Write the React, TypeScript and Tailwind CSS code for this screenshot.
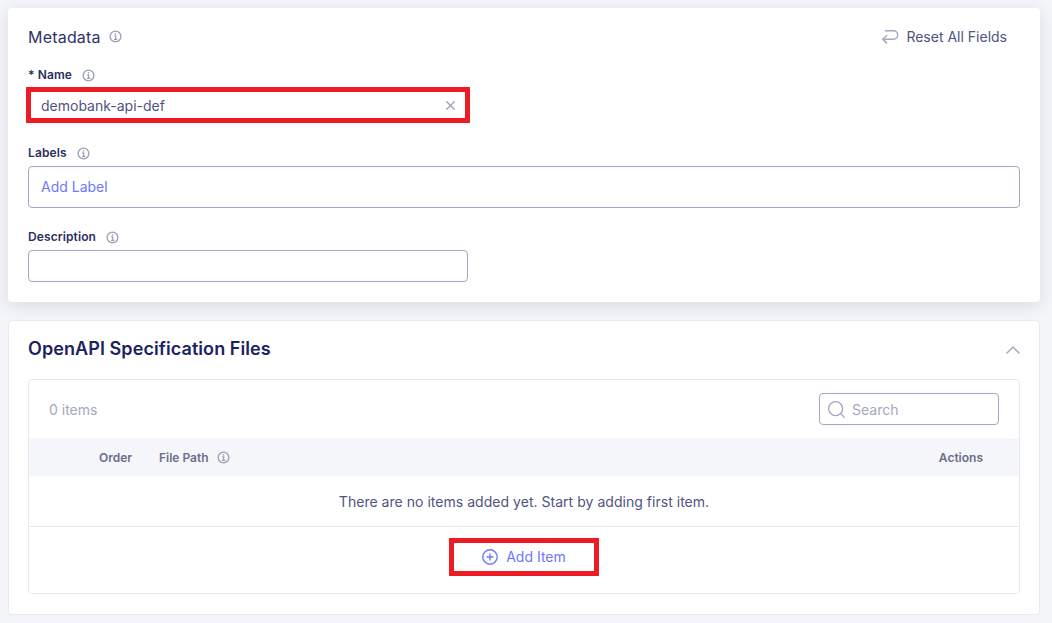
import React from "react";
import { ChevronUp, Search, X } from "lucide-react";

function InfoIcon({ className = "" }: { className?: string }) {
  return (
    <svg viewBox="0 0 14 14" className={`w-[13px] h-[13px] text-[#9a9fb5] ${className}`} fill="none" stroke="currentColor">
      <circle cx="7" cy="7" r="5.8" strokeWidth="1.4" />
      <path d="M5.6 6.3H7.2V10M5.4 10H9" strokeWidth="1.3" />
      <path d="M7 3.4V4.9" strokeWidth="1.5" />
    </svg>
  );
}

function FieldLabel({ children }: { children: React.ReactNode }) {
  return (
    <div className="flex items-center gap-[10px] h-4 text-[12px] font-semibold tracking-[0.1px] text-[#2a2f5e]">
      <span>{children}</span>
      <InfoIcon />
    </div>
  );
}

export default function App() {
  return (
    <div className="h-[623px] overflow-hidden bg-[#f4f5f9] pt-2 pl-2 pr-3 font-['Inter',sans-serif]">
      {/* Metadata card */}
      <section className="h-[294px] rounded-[4px] bg-white px-5 shadow-[0_4px_16px_rgba(40,44,80,0.12)]">
        <div className="flex h-[59px] items-center justify-between pb-[2px]">
          <div className="flex items-center gap-2 text-[16px] tracking-[0.2px] text-[#2f3468]">
            <span>Metadata</span>
            <InfoIcon />
          </div>
          <div className="flex items-center gap-[7px] pr-[13px] text-[14px] text-[#4f5482]">
            <svg viewBox="0 0 18 16" className="w-[18px] h-4 text-[#a4a8bf]" fill="none" stroke="currentColor" strokeWidth="1.5">
              <path d="M4 1.8H12.5a4.2 4.2 0 0 1 0 8.4H2" />
              <path d="M6 6.2L1.8 10.2L6 14.4" />
            </svg>
            <span>Reset All Fields</span>
          </div>
        </div>

        <FieldLabel>* Name</FieldLabel>
        <div className="mt-[4px] -ml-[2px] flex h-9 w-[444px] items-center justify-between border-[5px] border-[#ed1c24] pl-[10px] pr-[7px] text-[14px] text-[#4f5482]">
          <span>demobank-api-def</span>
          <X className="w-[15px] h-[15px] text-[#9a9fb5]" strokeWidth={2} />
        </div>

        <div className="mt-[22px]">
          <FieldLabel>Labels</FieldLabel>
        </div>
        <div className="mt-[5px] flex h-[42px] items-center rounded-[4px] border border-[#a3a7c0] pb-[1px] pl-3 text-[14px] text-[#6d78fb]">
          Add Label
        </div>

        <div className="mt-[21px]">
          <FieldLabel>Description</FieldLabel>
        </div>
        <div className="mt-[5px] h-8 w-[440px] rounded-[4px] border border-[#a3a7c0]" />
      </section>

      {/* OpenAPI files card */}
      <section className="mt-[18px] h-[295px] rounded-[4px] border border-[#e8e9f2] bg-white px-[19px]">
        <div className="flex h-[58px] items-center justify-between pb-[3px]">
          <h2 className="text-[18px] font-semibold tracking-[0.08px] text-[#1c2260]">OpenAPI Specification Files</h2>
          <ChevronUp className="-mr-[5px] mt-[3px] w-6 h-6 text-[#a4a8bf]" strokeWidth={1.5} />
        </div>

        <div className="h-[215px] rounded-[4px] border border-[#e8e9f2]">
          <div className="flex h-[58px] items-center justify-between px-5">
            <span className="text-[14px] text-[#a4a8bf]">0 items</span>
            <div className="flex h-8 w-[180px] items-center gap-[5px] rounded-[4px] border border-[#a3a7c0] pl-[6px] text-[14px] text-[#a4a8bf]">
              <Search className="w-[21px] h-[21px]" strokeWidth={1.5} />
              <span>Search</span>
            </div>
          </div>

          <div className="flex h-[38px] items-center bg-[#f5f6f9] pt-[1px] text-[12px] font-semibold text-[#6a6f88]">
            <span className="ml-[70px] w-[60px]">Order</span>
            <span>File Path</span>
            <InfoIcon className="ml-2" />
            <span className="ml-auto mr-9">Actions</span>
          </div>

          <div className="flex h-[51px] items-center justify-center border-b border-[#e8e9f2] text-[14px] tracking-[0.03px] text-[#4f5482]">
            There are no items added yet. Start by adding first item.
          </div>

          <div className="flex h-[66px] justify-center pt-[11px]">
            <div className="flex h-[38px] w-[150px] items-center justify-center gap-2 border-[5px] border-[#ed1c24] pb-[1px] text-[14px] text-[#6d78fb]">
              <svg viewBox="0 0 16 16" className="w-4 h-4" fill="none" stroke="currentColor" strokeWidth="1.4">
                <circle cx="8" cy="8" r="7.2" />
                <path d="M8 4.5V11.5M4.5 8H11.5" />
              </svg>
              <span>Add Item</span>
            </div>
          </div>
        </div>
      </section>
    </div>
  );
}
